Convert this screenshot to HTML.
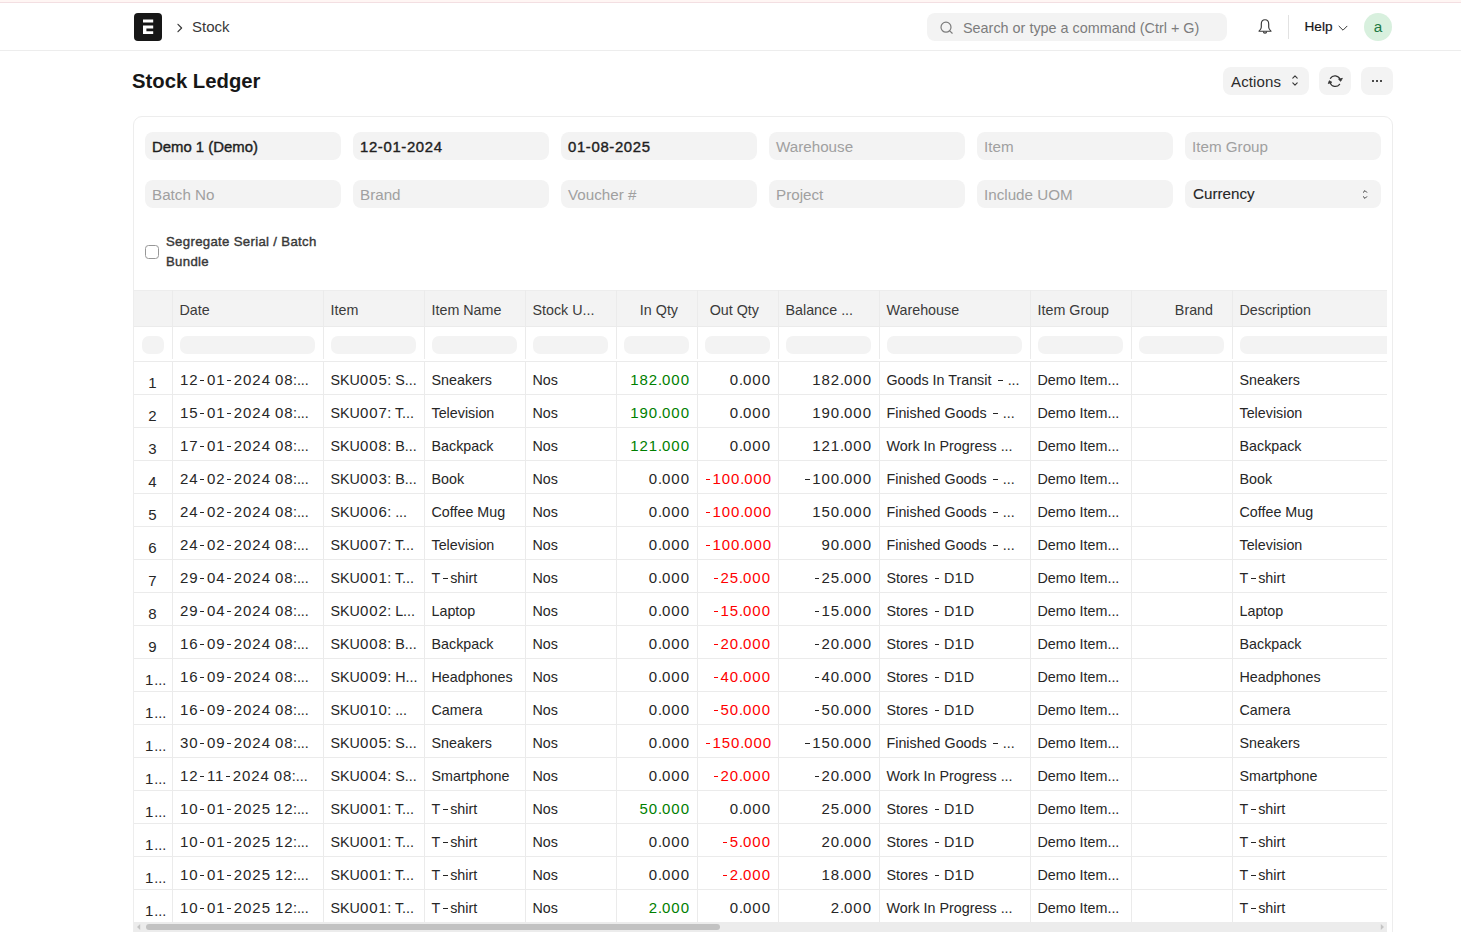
<!DOCTYPE html><html><head><meta charset="utf-8"><style>
*{margin:0;padding:0;box-sizing:border-box}
html,body{width:1461px;height:932px;overflow:hidden;background:#fff}
body{font-family:"Liberation Sans", sans-serif;color:#171717;position:relative}
.a{position:absolute;white-space:nowrap}
.t{position:absolute;white-space:nowrap;line-height:16px}
.hy{display:inline-block;width:4.6px;height:1.3px;background:currentColor;vertical-align:3.8px;margin:0 2.5px 0 1.2px}
.hs{margin:0 2.3px 0 0}
.ht{margin:0 2.3px 0 2.6px;width:5px}
.d{letter-spacing:0.95px;font-size:15px}
.dc{margin-right:-0.6px}
.hsp{margin:0 1.1px 0 2.8px;width:4.4px}
.med{-webkit-text-stroke:0.4px currentColor}
.n{}
.fld{position:absolute;width:196px;height:28px;background:#f3f3f3;border-radius:8px}
.ph{color:#a0a0a0;font-size:15.2px}
.btn{position:absolute;background:#f3f3f3;border-radius:8px;height:28px}
.cell{position:absolute;font-size:14.3px;color:#262626;white-space:nowrap;line-height:16px}
.hd{position:absolute;font-size:14.3px;color:#3a3a3a;white-space:nowrap;line-height:16px}
.vl{position:absolute;width:1px;background:#ebebeb}
.hl{position:absolute;height:1px;background:#ebebeb}
.pill{position:absolute;height:18px;background:#f3f3f3;border-radius:7px}
.g{color:#008000}
.r{color:#ff0000}
</style></head><body><div class="a" style="left:0;top:0;width:1461px;height:2px;background:#fff6f4"></div>
<div class="a" style="left:0;top:2px;width:1461px;height:1px;background:#f3dfe2"></div>
<div class="a" style="left:0;top:50px;width:1461px;height:1px;background:#ededed"></div>
<svg class="a" style="left:134px;top:13px" width="28" height="28" viewBox="0 0 28 28"><rect width="28" height="28" rx="4" fill="#171717"/><rect x="9" y="6.5" width="10.2" height="3" fill="#fff"/><path d="M9 12.5H19.2V15.4H12.4V18.3H19.2V21.1H9Z" fill="#fff"/></svg>
<svg class="a" style="left:176px;top:22px" width="8" height="12" viewBox="0 0 8 12"><path d="M2 2.3L5.6 6L2 9.7" fill="none" stroke="#383838" stroke-width="1.2" stroke-linecap="round" stroke-linejoin="round"/></svg>
<div class="t" style="left:192px;top:19px;font-size:15px;color:#383838">Stock</div>
<div class="a" style="left:927px;top:13px;width:300px;height:28px;background:#f3f3f3;border-radius:8px"></div>
<svg class="a" style="left:939px;top:20px" width="15" height="15" viewBox="0 0 15 15"><circle cx="7" cy="7.2" r="5" fill="none" stroke="#7c7c7c" stroke-width="1.2"/><path d="M10.7 10.9L13.2 13.2" stroke="#7c7c7c" stroke-width="1.2" stroke-linecap="round"/></svg>
<div class="t" style="left:963px;top:19.7px;font-size:14.4px;color:#7c7c7c">Search or type a command (Ctrl + G)</div>
<svg class="a" style="left:1256px;top:17px" width="18" height="19" viewBox="0 0 18 19"><path d="M9 2.7C6.7 2.7 5.3 4.6 5.3 7V10.2C5.3 11.6 4.4 12.8 3 14.2H15C13.6 12.8 12.7 11.6 12.7 10.2V7C12.7 4.6 11.3 2.7 9 2.7Z" fill="none" stroke="#383838" stroke-width="1.15" stroke-linejoin="round"/><path d="M7.4 14.5A1.6 1.6 0 0 0 10.6 14.5" fill="none" stroke="#383838" stroke-width="1.15"/></svg>
<div class="a" style="left:1288px;top:15px;width:1px;height:24px;background:#e2e2e2"></div>
<div class="t" style="left:1304.5px;top:19.3px;font-size:13.6px;color:#171717;-webkit-text-stroke:0.2px #171717">Help</div>
<svg class="a" style="left:1337px;top:24px" width="12" height="8" viewBox="0 0 12 8"><path d="M2 2.2L6 6.2L10 2.2" fill="none" stroke="#383838" stroke-width="1" stroke-linecap="round" stroke-linejoin="round"/></svg>
<div class="a" style="left:1364px;top:13px;width:28px;height:28px;border-radius:50%;background:#d8f0de"></div>
<div class="t" style="left:1364px;top:19px;width:28px;text-align:center;font-size:15.3px;color:#1f7a45">a</div>
<div class="t" style="left:132px;top:70px;line-height:22px;font-size:20.3px;font-weight:bold;color:#171717">Stock Ledger</div>
<div class="btn" style="left:1223px;top:67px;width:86px"></div>
<div class="t" style="left:1231px;top:73.5px;font-size:15px;letter-spacing:0.15px;color:#2b2b2b">Actions</div>
<svg class="a" style="left:1290px;top:74px" width="10" height="13" viewBox="0 0 10 13"><path d="M2.8 4.2L5 1.9L7.2 4.2M2.8 8.9L5 11.2L7.2 8.9" fill="none" stroke="#383838" stroke-width="1.1" stroke-linecap="round" stroke-linejoin="round"/></svg>
<div class="btn" style="left:1319px;top:67px;width:32px"></div>
<svg class="a" style="left:1325px;top:72px" width="20" height="18" viewBox="0 0 20 18"><path d="M5.4 6.3A5.4 5.4 0 0 1 15.0 7.4" fill="none" stroke="#333" stroke-width="1.25" stroke-linecap="round"/><path d="M14.6 12.3A5.4 5.4 0 0 1 5.1 10.6" fill="none" stroke="#333" stroke-width="1.25" stroke-linecap="round"/><path d="M13.6 7.3L17.4 6.3L15.7 9.3Z" fill="#333" stroke="#333" stroke-width="0.8" stroke-linejoin="round"/><path d="M6.8 10.2L4.3 8.7L3.3 11.6Z" fill="#333" stroke="#333" stroke-width="0.8" stroke-linejoin="round"/></svg>
<div class="btn" style="left:1361px;top:67px;width:32px"></div>
<div class="a" style="left:1372px;top:80px;width:2px;height:2px;background:#4a4a4a"></div>
<div class="a" style="left:1376px;top:80px;width:2px;height:2px;background:#4a4a4a"></div>
<div class="a" style="left:1380px;top:80px;width:2px;height:2px;background:#4a4a4a"></div>
<div class="a" style="left:133px;top:116px;width:1260px;height:830px;border:1px solid #ededed;border-radius:9px"></div>
<div class="fld" style="left:145px;top:132px"></div>
<div class="t med" style="left:152px;top:139px;font-size:14.9px;color:#1f1f1f;letter-spacing:0px">Demo 1 (Demo)</div>
<div class="fld" style="left:353px;top:132px"></div>
<div class="t med" style="left:360px;top:139px;font-size:14.9px;color:#1f1f1f;letter-spacing:0.65px">12-01-2024</div>
<div class="fld" style="left:561px;top:132px"></div>
<div class="t med" style="left:568px;top:139px;font-size:14.9px;color:#1f1f1f;letter-spacing:0.65px">01-08-2025</div>
<div class="fld" style="left:769px;top:132px"></div>
<div class="t ph" style="left:776px;top:139px">Warehouse</div>
<div class="fld" style="left:977px;top:132px"></div>
<div class="t ph" style="left:984px;top:139px">Item</div>
<div class="fld" style="left:1185px;top:132px"></div>
<div class="t ph" style="left:1192px;top:139px">Item Group</div>
<div class="fld" style="left:145px;top:180px"></div>
<div class="t ph" style="left:152px;top:187px">Batch No</div>
<div class="fld" style="left:353px;top:180px"></div>
<div class="t ph" style="left:360px;top:187px">Brand</div>
<div class="fld" style="left:561px;top:180px"></div>
<div class="t ph" style="left:568px;top:187px">Voucher #</div>
<div class="fld" style="left:769px;top:180px"></div>
<div class="t ph" style="left:776px;top:187px">Project</div>
<div class="fld" style="left:977px;top:180px"></div>
<div class="t ph" style="left:984px;top:187px">Include UOM</div>
<div class="fld" style="left:1185px;top:180px"></div>
<div class="t med" style="left:1193px;top:186px;font-size:15.2px;color:#262626;-webkit-text-stroke:0.1px #262626">Currency</div>
<svg class="a" style="left:1360px;top:188px" width="10" height="13" viewBox="0 0 10 13"><path d="M3.3 4.3L5 2.6L6.7 4.3M3.3 8.7L5 10.4L6.7 8.7" fill="none" stroke="#383838" stroke-width="1" stroke-linecap="round" stroke-linejoin="round"/></svg>
<div class="a" style="left:145px;top:245px;width:14px;height:14px;border:1px solid #979797;border-radius:3.5px;background:#fff"></div>
<div class="a med" style="left:166px;top:231.6px;font-size:13.2px;letter-spacing:0.32px;color:#383838;line-height:20px;white-space:normal;width:170px">Segregate Serial / Batch<br>Bundle</div>
<div class="a" style="left:134px;top:290px;width:1253px;height:36px;background:#f3f3f3"></div>
<div class="hl" style="left:134px;top:290px;width:1253px;background:#ededed"></div>
<div class="hl" style="left:134px;top:326px;width:1253px"></div>
<div class="hl" style="left:134px;top:361px;width:1253px"></div>
<div class="hl" style="left:134px;top:394px;width:1253px"></div>
<div class="hl" style="left:134px;top:427px;width:1253px"></div>
<div class="hl" style="left:134px;top:460px;width:1253px"></div>
<div class="hl" style="left:134px;top:493px;width:1253px"></div>
<div class="hl" style="left:134px;top:526px;width:1253px"></div>
<div class="hl" style="left:134px;top:559px;width:1253px"></div>
<div class="hl" style="left:134px;top:592px;width:1253px"></div>
<div class="hl" style="left:134px;top:625px;width:1253px"></div>
<div class="hl" style="left:134px;top:658px;width:1253px"></div>
<div class="hl" style="left:134px;top:691px;width:1253px"></div>
<div class="hl" style="left:134px;top:724px;width:1253px"></div>
<div class="hl" style="left:134px;top:757px;width:1253px"></div>
<div class="hl" style="left:134px;top:790px;width:1253px"></div>
<div class="hl" style="left:134px;top:823px;width:1253px"></div>
<div class="hl" style="left:134px;top:856px;width:1253px"></div>
<div class="hl" style="left:134px;top:889px;width:1253px"></div>
<div class="vl" style="left:172px;top:290px;height:632px"></div>
<div class="vl" style="left:323px;top:290px;height:632px"></div>
<div class="vl" style="left:424px;top:290px;height:632px"></div>
<div class="vl" style="left:525px;top:290px;height:632px"></div>
<div class="vl" style="left:616px;top:290px;height:632px"></div>
<div class="vl" style="left:697px;top:290px;height:632px"></div>
<div class="vl" style="left:778px;top:290px;height:632px"></div>
<div class="vl" style="left:879px;top:290px;height:632px"></div>
<div class="vl" style="left:1030px;top:290px;height:632px"></div>
<div class="vl" style="left:1131px;top:290px;height:632px"></div>
<div class="vl" style="left:1232px;top:290px;height:632px"></div>
<div class="hd" style="left:179.5px;top:302px">Date</div>
<div class="hd" style="left:330.5px;top:302px">Item</div>
<div class="hd" style="left:431.5px;top:302px">Item Name</div>
<div class="hd" style="left:532.5px;top:302px">Stock U...</div>
<div class="hd" style="left:616px;width:62px;text-align:right;top:302px">In Qty</div>
<div class="hd" style="left:697px;width:62px;text-align:right;top:302px">Out Qty</div>
<div class="hd" style="left:785.5px;top:302px">Balance ...</div>
<div class="hd" style="left:886.5px;top:302px">Warehouse</div>
<div class="hd" style="left:1037.5px;top:302px">Item Group</div>
<div class="hd" style="left:1131px;width:82px;text-align:right;top:302px">Brand</div>
<div class="hd" style="left:1239.5px;top:302px">Description</div>
<div class="pill" style="left:142px;top:336px;width:22px"></div>
<div class="pill" style="left:180px;top:336px;width:135px"></div>
<div class="pill" style="left:331px;top:336px;width:85px"></div>
<div class="pill" style="left:432px;top:336px;width:85px"></div>
<div class="pill" style="left:533px;top:336px;width:75px"></div>
<div class="pill" style="left:624px;top:336px;width:65px"></div>
<div class="pill" style="left:705px;top:336px;width:65px"></div>
<div class="pill" style="left:786px;top:336px;width:85px"></div>
<div class="pill" style="left:887px;top:336px;width:135px"></div>
<div class="pill" style="left:1038px;top:336px;width:85px"></div>
<div class="pill" style="left:1139px;top:336px;width:85px"></div>
<div class="pill" style="left:1240px;top:336px;width:147px;border-radius:7px 0 0 7px"></div>
<div class="a" style="left:134px;top:359px;width:1253px;height:2px;background:#fff"></div>
<div class="cell n" style="left:134px;width:38px;text-align:center;top:375px"><span class="d">1</span></div>
<div class="cell n" style="left:180px;top:372px"><span class="d">12</span><span class="hy"></span><span class="d">01</span><span class="hy"></span><span class="d">2024</span> <span class="d dc">08</span>:...</div>
<div class="cell" style="left:330.5px;top:372px">SKU<span class="d dc">005</span>: S...</div>
<div class="cell" style="left:431.5px;top:372px">Sneakers</div>
<div class="cell" style="left:532.5px;top:372px">Nos</div>
<div class="cell n g" style="left:616px;width:73.95px;text-align:right;top:372px"><span class="d">182</span>.<span class="d">000</span></div>
<div class="cell n " style="left:697px;width:73.95px;text-align:right;top:372px"><span class="d">0</span>.<span class="d">000</span></div>
<div class="cell n " style="left:778px;width:93.95px;text-align:right;top:372px"><span class="d">182</span>.<span class="d">000</span></div>
<div class="cell" style="left:886.5px;top:372px">Goods In Transit <span class="hy hsp"></span> ...</div>
<div class="cell" style="left:1037.5px;top:372px">Demo Item...</div>
<div class="cell" style="left:1239.5px;top:372px">Sneakers</div>
<div class="cell n" style="left:134px;width:38px;text-align:center;top:408px"><span class="d">2</span></div>
<div class="cell n" style="left:180px;top:405px"><span class="d">15</span><span class="hy"></span><span class="d">01</span><span class="hy"></span><span class="d">2024</span> <span class="d dc">08</span>:...</div>
<div class="cell" style="left:330.5px;top:405px">SKU<span class="d dc">007</span>: T...</div>
<div class="cell" style="left:431.5px;top:405px">Television</div>
<div class="cell" style="left:532.5px;top:405px">Nos</div>
<div class="cell n g" style="left:616px;width:73.95px;text-align:right;top:405px"><span class="d">190</span>.<span class="d">000</span></div>
<div class="cell n " style="left:697px;width:73.95px;text-align:right;top:405px"><span class="d">0</span>.<span class="d">000</span></div>
<div class="cell n " style="left:778px;width:93.95px;text-align:right;top:405px"><span class="d">190</span>.<span class="d">000</span></div>
<div class="cell" style="left:886.5px;top:405px">Finished Goods <span class="hy hsp"></span> ...</div>
<div class="cell" style="left:1037.5px;top:405px">Demo Item...</div>
<div class="cell" style="left:1239.5px;top:405px">Television</div>
<div class="cell n" style="left:134px;width:38px;text-align:center;top:441px"><span class="d">3</span></div>
<div class="cell n" style="left:180px;top:438px"><span class="d">17</span><span class="hy"></span><span class="d">01</span><span class="hy"></span><span class="d">2024</span> <span class="d dc">08</span>:...</div>
<div class="cell" style="left:330.5px;top:438px">SKU<span class="d dc">008</span>: B...</div>
<div class="cell" style="left:431.5px;top:438px">Backpack</div>
<div class="cell" style="left:532.5px;top:438px">Nos</div>
<div class="cell n g" style="left:616px;width:73.95px;text-align:right;top:438px"><span class="d">121</span>.<span class="d">000</span></div>
<div class="cell n " style="left:697px;width:73.95px;text-align:right;top:438px"><span class="d">0</span>.<span class="d">000</span></div>
<div class="cell n " style="left:778px;width:93.95px;text-align:right;top:438px"><span class="d">121</span>.<span class="d">000</span></div>
<div class="cell" style="left:886.5px;top:438px">Work In Progress ...</div>
<div class="cell" style="left:1037.5px;top:438px">Demo Item...</div>
<div class="cell" style="left:1239.5px;top:438px">Backpack</div>
<div class="cell n" style="left:134px;width:38px;text-align:center;top:474px"><span class="d">4</span></div>
<div class="cell n" style="left:180px;top:471px"><span class="d">24</span><span class="hy"></span><span class="d">02</span><span class="hy"></span><span class="d">2024</span> <span class="d dc">08</span>:...</div>
<div class="cell" style="left:330.5px;top:471px">SKU<span class="d dc">003</span>: B...</div>
<div class="cell" style="left:431.5px;top:471px">Book</div>
<div class="cell" style="left:532.5px;top:471px">Nos</div>
<div class="cell n " style="left:616px;width:73.95px;text-align:right;top:471px"><span class="d">0</span>.<span class="d">000</span></div>
<div class="cell n r" style="left:705.5px;top:471px"><span class="hy hs"></span><span class="d">100</span>.<span class="d">000</span></div>
<div class="cell n " style="left:778px;width:93.95px;text-align:right;top:471px"><span class="hy hs"></span><span class="d">100</span>.<span class="d">000</span></div>
<div class="cell" style="left:886.5px;top:471px">Finished Goods <span class="hy hsp"></span> ...</div>
<div class="cell" style="left:1037.5px;top:471px">Demo Item...</div>
<div class="cell" style="left:1239.5px;top:471px">Book</div>
<div class="cell n" style="left:134px;width:38px;text-align:center;top:507px"><span class="d">5</span></div>
<div class="cell n" style="left:180px;top:504px"><span class="d">24</span><span class="hy"></span><span class="d">02</span><span class="hy"></span><span class="d">2024</span> <span class="d dc">08</span>:...</div>
<div class="cell" style="left:330.5px;top:504px">SKU<span class="d dc">006</span>: ...</div>
<div class="cell" style="left:431.5px;top:504px">Coffee Mug</div>
<div class="cell" style="left:532.5px;top:504px">Nos</div>
<div class="cell n " style="left:616px;width:73.95px;text-align:right;top:504px"><span class="d">0</span>.<span class="d">000</span></div>
<div class="cell n r" style="left:705.5px;top:504px"><span class="hy hs"></span><span class="d">100</span>.<span class="d">000</span></div>
<div class="cell n " style="left:778px;width:93.95px;text-align:right;top:504px"><span class="d">150</span>.<span class="d">000</span></div>
<div class="cell" style="left:886.5px;top:504px">Finished Goods <span class="hy hsp"></span> ...</div>
<div class="cell" style="left:1037.5px;top:504px">Demo Item...</div>
<div class="cell" style="left:1239.5px;top:504px">Coffee Mug</div>
<div class="cell n" style="left:134px;width:38px;text-align:center;top:540px"><span class="d">6</span></div>
<div class="cell n" style="left:180px;top:537px"><span class="d">24</span><span class="hy"></span><span class="d">02</span><span class="hy"></span><span class="d">2024</span> <span class="d dc">08</span>:...</div>
<div class="cell" style="left:330.5px;top:537px">SKU<span class="d dc">007</span>: T...</div>
<div class="cell" style="left:431.5px;top:537px">Television</div>
<div class="cell" style="left:532.5px;top:537px">Nos</div>
<div class="cell n " style="left:616px;width:73.95px;text-align:right;top:537px"><span class="d">0</span>.<span class="d">000</span></div>
<div class="cell n r" style="left:705.5px;top:537px"><span class="hy hs"></span><span class="d">100</span>.<span class="d">000</span></div>
<div class="cell n " style="left:778px;width:93.95px;text-align:right;top:537px"><span class="d">90</span>.<span class="d">000</span></div>
<div class="cell" style="left:886.5px;top:537px">Finished Goods <span class="hy hsp"></span> ...</div>
<div class="cell" style="left:1037.5px;top:537px">Demo Item...</div>
<div class="cell" style="left:1239.5px;top:537px">Television</div>
<div class="cell n" style="left:134px;width:38px;text-align:center;top:573px"><span class="d">7</span></div>
<div class="cell n" style="left:180px;top:570px"><span class="d">29</span><span class="hy"></span><span class="d">04</span><span class="hy"></span><span class="d">2024</span> <span class="d dc">08</span>:...</div>
<div class="cell" style="left:330.5px;top:570px">SKU<span class="d dc">001</span>: T...</div>
<div class="cell" style="left:431.5px;top:570px">T<span class="hy ht"></span>shirt</div>
<div class="cell" style="left:532.5px;top:570px">Nos</div>
<div class="cell n " style="left:616px;width:73.95px;text-align:right;top:570px"><span class="d">0</span>.<span class="d">000</span></div>
<div class="cell n r" style="left:697px;width:73.95px;text-align:right;top:570px"><span class="hy hs"></span><span class="d">25</span>.<span class="d">000</span></div>
<div class="cell n " style="left:778px;width:93.95px;text-align:right;top:570px"><span class="hy hs"></span><span class="d">25</span>.<span class="d">000</span></div>
<div class="cell" style="left:886.5px;top:570px">Stores <span class="hy hsp"></span> D<span class="d">1</span>D</div>
<div class="cell" style="left:1037.5px;top:570px">Demo Item...</div>
<div class="cell" style="left:1239.5px;top:570px">T<span class="hy ht"></span>shirt</div>
<div class="cell n" style="left:134px;width:38px;text-align:center;top:606px"><span class="d">8</span></div>
<div class="cell n" style="left:180px;top:603px"><span class="d">29</span><span class="hy"></span><span class="d">04</span><span class="hy"></span><span class="d">2024</span> <span class="d dc">08</span>:...</div>
<div class="cell" style="left:330.5px;top:603px">SKU<span class="d dc">002</span>: L...</div>
<div class="cell" style="left:431.5px;top:603px">Laptop</div>
<div class="cell" style="left:532.5px;top:603px">Nos</div>
<div class="cell n " style="left:616px;width:73.95px;text-align:right;top:603px"><span class="d">0</span>.<span class="d">000</span></div>
<div class="cell n r" style="left:697px;width:73.95px;text-align:right;top:603px"><span class="hy hs"></span><span class="d">15</span>.<span class="d">000</span></div>
<div class="cell n " style="left:778px;width:93.95px;text-align:right;top:603px"><span class="hy hs"></span><span class="d">15</span>.<span class="d">000</span></div>
<div class="cell" style="left:886.5px;top:603px">Stores <span class="hy hsp"></span> D<span class="d">1</span>D</div>
<div class="cell" style="left:1037.5px;top:603px">Demo Item...</div>
<div class="cell" style="left:1239.5px;top:603px">Laptop</div>
<div class="cell n" style="left:134px;width:38px;text-align:center;top:639px"><span class="d">9</span></div>
<div class="cell n" style="left:180px;top:636px"><span class="d">16</span><span class="hy"></span><span class="d">09</span><span class="hy"></span><span class="d">2024</span> <span class="d dc">08</span>:...</div>
<div class="cell" style="left:330.5px;top:636px">SKU<span class="d dc">008</span>: B...</div>
<div class="cell" style="left:431.5px;top:636px">Backpack</div>
<div class="cell" style="left:532.5px;top:636px">Nos</div>
<div class="cell n " style="left:616px;width:73.95px;text-align:right;top:636px"><span class="d">0</span>.<span class="d">000</span></div>
<div class="cell n r" style="left:697px;width:73.95px;text-align:right;top:636px"><span class="hy hs"></span><span class="d">20</span>.<span class="d">000</span></div>
<div class="cell n " style="left:778px;width:93.95px;text-align:right;top:636px"><span class="hy hs"></span><span class="d">20</span>.<span class="d">000</span></div>
<div class="cell" style="left:886.5px;top:636px">Stores <span class="hy hsp"></span> D<span class="d">1</span>D</div>
<div class="cell" style="left:1037.5px;top:636px">Demo Item...</div>
<div class="cell" style="left:1239.5px;top:636px">Backpack</div>
<div class="cell n" style="left:136.5px;width:38px;text-align:center;top:672px"><span class="d">1</span>...</div>
<div class="cell n" style="left:180px;top:669px"><span class="d">16</span><span class="hy"></span><span class="d">09</span><span class="hy"></span><span class="d">2024</span> <span class="d dc">08</span>:...</div>
<div class="cell" style="left:330.5px;top:669px">SKU<span class="d dc">009</span>: H...</div>
<div class="cell" style="left:431.5px;top:669px">Headphones</div>
<div class="cell" style="left:532.5px;top:669px">Nos</div>
<div class="cell n " style="left:616px;width:73.95px;text-align:right;top:669px"><span class="d">0</span>.<span class="d">000</span></div>
<div class="cell n r" style="left:697px;width:73.95px;text-align:right;top:669px"><span class="hy hs"></span><span class="d">40</span>.<span class="d">000</span></div>
<div class="cell n " style="left:778px;width:93.95px;text-align:right;top:669px"><span class="hy hs"></span><span class="d">40</span>.<span class="d">000</span></div>
<div class="cell" style="left:886.5px;top:669px">Stores <span class="hy hsp"></span> D<span class="d">1</span>D</div>
<div class="cell" style="left:1037.5px;top:669px">Demo Item...</div>
<div class="cell" style="left:1239.5px;top:669px">Headphones</div>
<div class="cell n" style="left:136.5px;width:38px;text-align:center;top:705px"><span class="d">1</span>...</div>
<div class="cell n" style="left:180px;top:702px"><span class="d">16</span><span class="hy"></span><span class="d">09</span><span class="hy"></span><span class="d">2024</span> <span class="d dc">08</span>:...</div>
<div class="cell" style="left:330.5px;top:702px">SKU<span class="d dc">010</span>: ...</div>
<div class="cell" style="left:431.5px;top:702px">Camera</div>
<div class="cell" style="left:532.5px;top:702px">Nos</div>
<div class="cell n " style="left:616px;width:73.95px;text-align:right;top:702px"><span class="d">0</span>.<span class="d">000</span></div>
<div class="cell n r" style="left:697px;width:73.95px;text-align:right;top:702px"><span class="hy hs"></span><span class="d">50</span>.<span class="d">000</span></div>
<div class="cell n " style="left:778px;width:93.95px;text-align:right;top:702px"><span class="hy hs"></span><span class="d">50</span>.<span class="d">000</span></div>
<div class="cell" style="left:886.5px;top:702px">Stores <span class="hy hsp"></span> D<span class="d">1</span>D</div>
<div class="cell" style="left:1037.5px;top:702px">Demo Item...</div>
<div class="cell" style="left:1239.5px;top:702px">Camera</div>
<div class="cell n" style="left:136.5px;width:38px;text-align:center;top:738px"><span class="d">1</span>...</div>
<div class="cell n" style="left:180px;top:735px"><span class="d">30</span><span class="hy"></span><span class="d">09</span><span class="hy"></span><span class="d">2024</span> <span class="d dc">08</span>:...</div>
<div class="cell" style="left:330.5px;top:735px">SKU<span class="d dc">005</span>: S...</div>
<div class="cell" style="left:431.5px;top:735px">Sneakers</div>
<div class="cell" style="left:532.5px;top:735px">Nos</div>
<div class="cell n " style="left:616px;width:73.95px;text-align:right;top:735px"><span class="d">0</span>.<span class="d">000</span></div>
<div class="cell n r" style="left:705.5px;top:735px"><span class="hy hs"></span><span class="d">150</span>.<span class="d">000</span></div>
<div class="cell n " style="left:778px;width:93.95px;text-align:right;top:735px"><span class="hy hs"></span><span class="d">150</span>.<span class="d">000</span></div>
<div class="cell" style="left:886.5px;top:735px">Finished Goods <span class="hy hsp"></span> ...</div>
<div class="cell" style="left:1037.5px;top:735px">Demo Item...</div>
<div class="cell" style="left:1239.5px;top:735px">Sneakers</div>
<div class="cell n" style="left:136.5px;width:38px;text-align:center;top:771px"><span class="d">1</span>...</div>
<div class="cell n" style="left:180px;top:768px"><span class="d">12</span><span class="hy"></span><span class="d">11</span><span class="hy"></span><span class="d">2024</span> <span class="d dc">08</span>:...</div>
<div class="cell" style="left:330.5px;top:768px">SKU<span class="d dc">004</span>: S...</div>
<div class="cell" style="left:431.5px;top:768px">Smartphone</div>
<div class="cell" style="left:532.5px;top:768px">Nos</div>
<div class="cell n " style="left:616px;width:73.95px;text-align:right;top:768px"><span class="d">0</span>.<span class="d">000</span></div>
<div class="cell n r" style="left:697px;width:73.95px;text-align:right;top:768px"><span class="hy hs"></span><span class="d">20</span>.<span class="d">000</span></div>
<div class="cell n " style="left:778px;width:93.95px;text-align:right;top:768px"><span class="hy hs"></span><span class="d">20</span>.<span class="d">000</span></div>
<div class="cell" style="left:886.5px;top:768px">Work In Progress ...</div>
<div class="cell" style="left:1037.5px;top:768px">Demo Item...</div>
<div class="cell" style="left:1239.5px;top:768px">Smartphone</div>
<div class="cell n" style="left:136.5px;width:38px;text-align:center;top:804px"><span class="d">1</span>...</div>
<div class="cell n" style="left:180px;top:801px"><span class="d">10</span><span class="hy"></span><span class="d">01</span><span class="hy"></span><span class="d">2025</span> <span class="d dc">12</span>:...</div>
<div class="cell" style="left:330.5px;top:801px">SKU<span class="d dc">001</span>: T...</div>
<div class="cell" style="left:431.5px;top:801px">T<span class="hy ht"></span>shirt</div>
<div class="cell" style="left:532.5px;top:801px">Nos</div>
<div class="cell n g" style="left:616px;width:73.95px;text-align:right;top:801px"><span class="d">50</span>.<span class="d">000</span></div>
<div class="cell n " style="left:697px;width:73.95px;text-align:right;top:801px"><span class="d">0</span>.<span class="d">000</span></div>
<div class="cell n " style="left:778px;width:93.95px;text-align:right;top:801px"><span class="d">25</span>.<span class="d">000</span></div>
<div class="cell" style="left:886.5px;top:801px">Stores <span class="hy hsp"></span> D<span class="d">1</span>D</div>
<div class="cell" style="left:1037.5px;top:801px">Demo Item...</div>
<div class="cell" style="left:1239.5px;top:801px">T<span class="hy ht"></span>shirt</div>
<div class="cell n" style="left:136.5px;width:38px;text-align:center;top:837px"><span class="d">1</span>...</div>
<div class="cell n" style="left:180px;top:834px"><span class="d">10</span><span class="hy"></span><span class="d">01</span><span class="hy"></span><span class="d">2025</span> <span class="d dc">12</span>:...</div>
<div class="cell" style="left:330.5px;top:834px">SKU<span class="d dc">001</span>: T...</div>
<div class="cell" style="left:431.5px;top:834px">T<span class="hy ht"></span>shirt</div>
<div class="cell" style="left:532.5px;top:834px">Nos</div>
<div class="cell n " style="left:616px;width:73.95px;text-align:right;top:834px"><span class="d">0</span>.<span class="d">000</span></div>
<div class="cell n r" style="left:697px;width:73.95px;text-align:right;top:834px"><span class="hy hs"></span><span class="d">5</span>.<span class="d">000</span></div>
<div class="cell n " style="left:778px;width:93.95px;text-align:right;top:834px"><span class="d">20</span>.<span class="d">000</span></div>
<div class="cell" style="left:886.5px;top:834px">Stores <span class="hy hsp"></span> D<span class="d">1</span>D</div>
<div class="cell" style="left:1037.5px;top:834px">Demo Item...</div>
<div class="cell" style="left:1239.5px;top:834px">T<span class="hy ht"></span>shirt</div>
<div class="cell n" style="left:136.5px;width:38px;text-align:center;top:870px"><span class="d">1</span>...</div>
<div class="cell n" style="left:180px;top:867px"><span class="d">10</span><span class="hy"></span><span class="d">01</span><span class="hy"></span><span class="d">2025</span> <span class="d dc">12</span>:...</div>
<div class="cell" style="left:330.5px;top:867px">SKU<span class="d dc">001</span>: T...</div>
<div class="cell" style="left:431.5px;top:867px">T<span class="hy ht"></span>shirt</div>
<div class="cell" style="left:532.5px;top:867px">Nos</div>
<div class="cell n " style="left:616px;width:73.95px;text-align:right;top:867px"><span class="d">0</span>.<span class="d">000</span></div>
<div class="cell n r" style="left:697px;width:73.95px;text-align:right;top:867px"><span class="hy hs"></span><span class="d">2</span>.<span class="d">000</span></div>
<div class="cell n " style="left:778px;width:93.95px;text-align:right;top:867px"><span class="d">18</span>.<span class="d">000</span></div>
<div class="cell" style="left:886.5px;top:867px">Stores <span class="hy hsp"></span> D<span class="d">1</span>D</div>
<div class="cell" style="left:1037.5px;top:867px">Demo Item...</div>
<div class="cell" style="left:1239.5px;top:867px">T<span class="hy ht"></span>shirt</div>
<div class="cell n" style="left:136.5px;width:38px;text-align:center;top:903px"><span class="d">1</span>...</div>
<div class="cell n" style="left:180px;top:900px"><span class="d">10</span><span class="hy"></span><span class="d">01</span><span class="hy"></span><span class="d">2025</span> <span class="d dc">12</span>:...</div>
<div class="cell" style="left:330.5px;top:900px">SKU<span class="d dc">001</span>: T...</div>
<div class="cell" style="left:431.5px;top:900px">T<span class="hy ht"></span>shirt</div>
<div class="cell" style="left:532.5px;top:900px">Nos</div>
<div class="cell n g" style="left:616px;width:73.95px;text-align:right;top:900px"><span class="d">2</span>.<span class="d">000</span></div>
<div class="cell n " style="left:697px;width:73.95px;text-align:right;top:900px"><span class="d">0</span>.<span class="d">000</span></div>
<div class="cell n " style="left:778px;width:93.95px;text-align:right;top:900px"><span class="d">2</span>.<span class="d">000</span></div>
<div class="cell" style="left:886.5px;top:900px">Work In Progress ...</div>
<div class="cell" style="left:1037.5px;top:900px">Demo Item...</div>
<div class="cell" style="left:1239.5px;top:900px">T<span class="hy ht"></span>shirt</div>
<div class="a" style="left:134px;top:922px;width:1253px;height:10px;background:#ececec"></div>
<div class="a" style="left:146px;top:924px;width:574px;height:6px;background:#c2c2c2;border-radius:3px"></div>
<svg class="a" style="left:136px;top:923px" width="6" height="8" viewBox="0 0 6 8"><path d="M4.2 1L1 4L4.2 7Z" fill="#c4c4c4"/></svg>
<svg class="a" style="left:1380px;top:923px" width="6" height="8" viewBox="0 0 6 8"><path d="M0.8 1L4 4L0.8 7Z" fill="#c4c4c4"/></svg></body></html>
